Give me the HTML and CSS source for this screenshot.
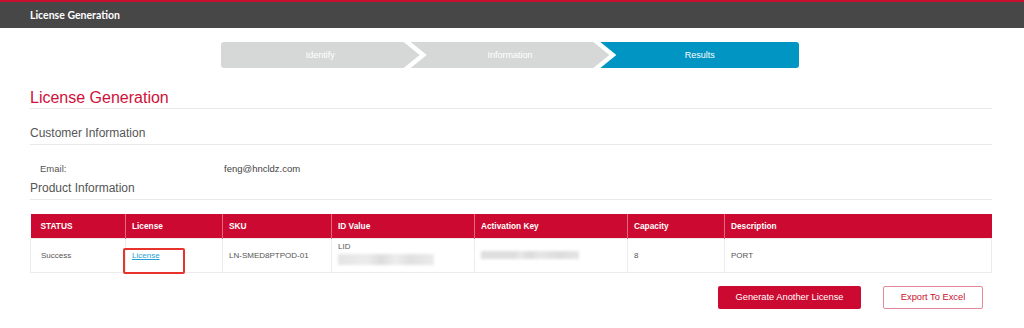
FILE: index.html
```html
<!DOCTYPE html>
<html lang="en">
<head>
    <meta charset="UTF-8">
    <meta name="viewport" content="width=device-width, initial-scale=1.0">
    <title>License Generation</title>
    <link rel="stylesheet" href="styles.css">
</head>
<body>
    <!-- Top Bar -->
    <div class="topbar">
        <span class="topbar-title">License Generation</span>
    </div>

    <!-- Stepper -->
    <div class="stepper">
        <div class="step step-first">Identify</div>
        <div class="step step-mid">Information</div>
        <div class="step step-last active">Results</div>
    </div>

    <div class="container">
        <h1>License Generation</h1>

        <h2 class="customer-title">Customer Information</h2>
        <div class="info-row">
            <span class="info-label">Email:</span>
            <span class="info-value">feng@hncldz.com</span>
        </div>

        <h2 class="product-title">Product Information</h2>

        <table class="results">
            <thead>
                <tr>
                    <th class="col-status">STATUS</th>
                    <th class="col-license">License</th>
                    <th class="col-sku">SKU</th>
                    <th class="col-id">ID Value</th>
                    <th class="col-key">Activation Key</th>
                    <th class="col-cap">Capacity</th>
                    <th>Description</th>
                </tr>
            </thead>
            <tbody>
                <tr>
                    <td class="col-status">Success</td>
                    <td class="license-cell">
                        <a href="#">License</a>
                        <span class="highlight"></span>
                    </td>
                    <td>LN-SMED8PTPOD-01</td>
                    <td class="id-cell">
                        <div>LID</div>
                        <div class="blur blur-id"></div>
                    </td>
                    <td><div class="blur blur-key"></div></td>
                    <td>8</td>
                    <td>PORT</td>
                </tr>
            </tbody>
        </table>

        <div class="actions">
            <button class="btn-primary">Generate Another License</button>
            <button class="btn-outline">Export To Excel</button>
        </div>
    </div>
</body>
</html>
```

FILE: styles.css
```css
* {
    box-sizing: border-box;
    margin: 0;
    padding: 0;
}

body {
    font-family: 'Liberation Sans', Arial, sans-serif;
    background-color: #fff;
    color: #555;
}

/* Top bar */
.topbar {
    height: 28px;
    background-color: #474747;
    border-top: 2px solid #c8102e;
    display: flex;
    align-items: center;
    padding-left: 30px;
}

.topbar-title {
    font-family: 'Lato', 'Liberation Sans', sans-serif;
    font-weight: 700;
    font-size: 10.5px;
    color: #fff;
}

/* Stepper */
.stepper {
    display: flex;
    width: 578px;
    margin: 14px 0 0 221px;
    height: 26px;
}

.step {
    flex: 1;
    display: flex;
    align-items: center;
    justify-content: center;
    background-color: #d6d8d8;
    color: #fff;
    font-size: 9px;
}

.step + .step {
    margin-left: -9px;
}

.step-first {
    border-radius: 3px 0 0 3px;
    clip-path: polygon(0 0, calc(100% - 16px) 0, 100% 50%, calc(100% - 16px) 100%, 0 100%);
}

.step-mid {
    clip-path: polygon(0 0, calc(100% - 16px) 0, 100% 50%, calc(100% - 16px) 100%, 0 100%, 16px 50%);
}

.step-last {
    border-radius: 0 3px 3px 0;
    clip-path: polygon(0 0, 100% 0, 100% 100%, 0 100%, 16px 50%);
}

.step.active {
    background-color: #0095c3;
}

/* Content */
.container {
    margin: 0 32px 0 30px;
    padding-top: 20px;
}

h1 {
    font-size: 16px;
    line-height: 20px;
    font-weight: normal;
    color: #d0103a;
    border-bottom: 1px solid #e8e8e8;
}

h2 {
    font-size: 12px;
    line-height: 15px;
    font-weight: normal;
    color: #555;
    padding-bottom: 3px;
    border-bottom: 1px solid #e8e8e8;
}

.customer-title {
    margin-top: 17px;
}

.product-title {
    margin-top: 6px;
}

.info-row {
    display: flex;
    font-size: 9.5px;
    line-height: 12px;
    padding: 18px 0 0 10px;
}

.info-label {
    width: 184px;
}

.info-value {
    color: #444;
}

/* Results table */
.results {
    width: 100%;
    margin-top: 14px;
    border-collapse: collapse;
    font-size: 8px;
}

.results th {
    background-color: #cc0a31;
    color: #fff;
    font-weight: bold;
    font-size: 8.3px;
    text-align: left;
    height: 24px;
    padding: 0 6px;
    border-left: 1px solid #e4697f;
}

.results th:first-child {
    border-left: none;
}

.results td {
    height: 34px;
    padding: 0 6px;
    border: 1px solid #ececec;
    color: #555;
}

.results .col-status {
    width: 95px;
    padding-left: 10px;
}

.col-license { width: 97px; }
.col-sku { width: 109px; }
.col-id { width: 143px; }
.col-key { width: 153px; }
.col-cap { width: 97px; }

.license-cell {
    position: relative;
}

.license-cell a {
    color: #2a9fd6;
}

.highlight {
    position: absolute;
    left: -3px;
    top: 9px;
    width: 62px;
    height: 26px;
    border: 2px solid #e8322e;
    border-radius: 2px;
}

.id-cell div:first-child {
    margin-top: -4px;
}

.blur {
    background: linear-gradient(90deg, #e4e4e4 0%, #ececec 30%, #dcdcdc 45%, #ededed 60%, #e0e0e0 75%, #ebebeb 100%);
    filter: blur(1.5px);
}

.blur-id {
    width: 96px;
    height: 11px;
    margin-top: 3px;
}

.blur-key {
    width: 98px;
    height: 8px;
    background: linear-gradient(90deg, #dedede 0%, #dedede 35%, #e8e8e8 40%, #dadada 50%, #e6e6e6 60%, #dcdcdc 80%, #e4e4e4 100%);
}

/* Buttons */
.actions {
    display: flex;
    justify-content: flex-end;
    gap: 22px;
    margin-top: 13px;
    padding-right: 9px;
}

button {
    height: 23px;
    font-family: inherit;
    font-size: 9.3px;
    border-radius: 2px;
    cursor: pointer;
}

.btn-primary {
    width: 143px;
    background-color: #cc0a31;
    color: #fff;
    border: none;
}

.btn-outline {
    width: 100px;
    background-color: #fff;
    color: #c8102e;
    border: 1px solid #e58a99;
}
```
